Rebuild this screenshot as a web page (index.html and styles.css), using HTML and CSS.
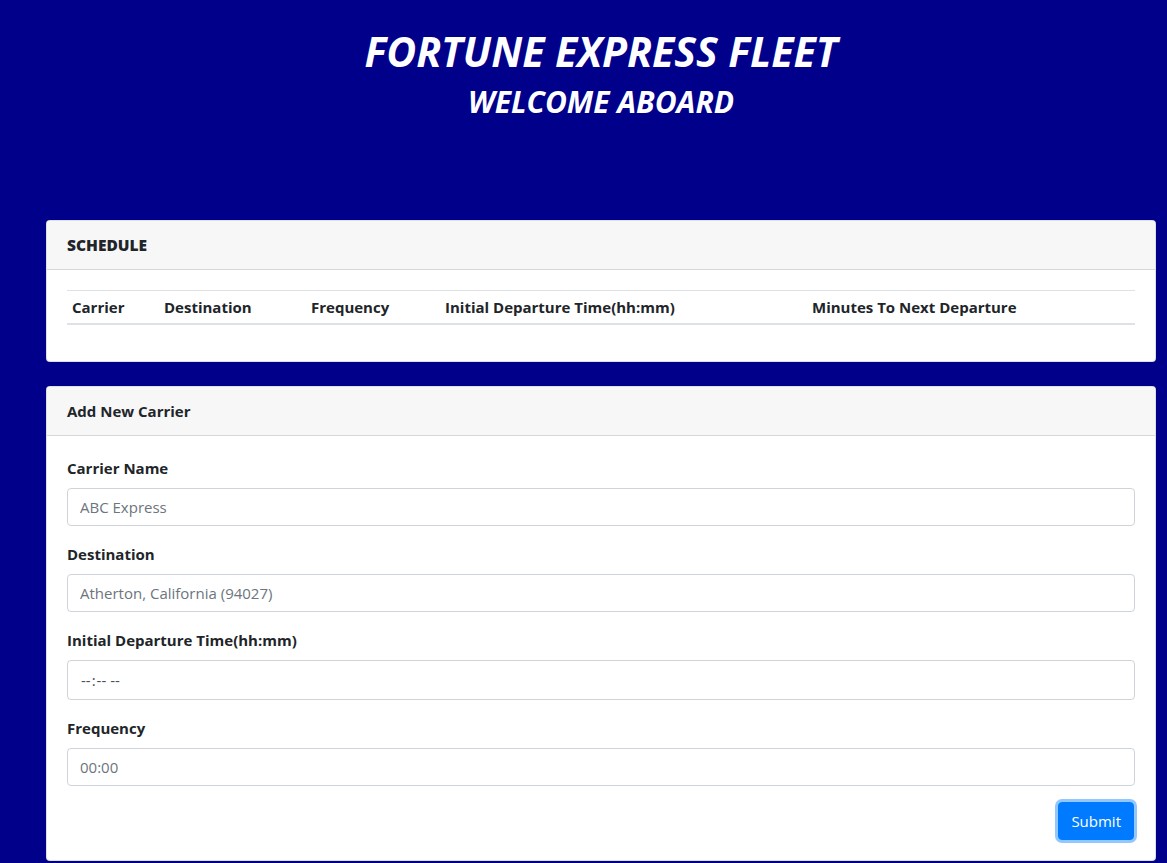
FILE: index.html
```html
<!DOCTYPE html>
<html lang="en">
<head>
<meta charset="utf-8">
<title>Fortune Express Fleet</title>
<link rel="stylesheet" href="styles.css">
</head>
<body>
<div class="page">
  <header class="hero">
    <h1 class="hero-title">FORTUNE EXPRESS FLEET</h1>
    <h2 class="hero-sub">WELCOME ABOARD</h2>
  </header>

  <section class="card">
    <div class="card-header heavy">SCHEDULE</div>
    <div class="card-body">
      <table class="table">
        <thead>
          <tr>
            <th class="c1">Carrier</th>
            <th class="c2">Destination</th>
            <th class="c3">Frequency</th>
            <th class="c4">Initial Departure Time(hh:mm)</th>
            <th class="c5">Minutes To Next Departure</th>
          </tr>
        </thead>
        <tbody></tbody>
      </table>
    </div>
  </section>

  <section class="card">
    <div class="card-header">Add New Carrier</div>
    <div class="card-body">
      <form class="form">
        <div class="form-group">
          <label for="name">Carrier Name</label>
          <input id="name" class="form-control" type="text" placeholder="ABC Express">
        </div>
        <div class="form-group">
          <label for="dest">Destination</label>
          <input id="dest" class="form-control" type="text" placeholder="Atherton, California (94027)">
        </div>
        <div class="form-group">
          <label for="time">Initial Departure Time(hh:mm)</label>
          <input id="time" class="form-control time" type="time">
        </div>
        <div class="form-group">
          <label for="freq">Frequency</label>
          <input id="freq" class="form-control" type="text" placeholder="00:00">
        </div>
        <div class="actions">
          <button type="button" class="btn">Submit</button>
        </div>
      </form>
    </div>
  </section>
</div>
</body>
</html>
```
FILE: styles.css
```css
html, body {
  margin: 0;
  padding: 0;
}
body {
  background: #00008b;
  font-family: "Segoe UI", "Open Sans", "Noto Sans", sans-serif;
  font-size: 16px;
  line-height: 1.5;
  color: #212529;
}
.page {
  width: 1110px;
  margin-left: 46px;
  padding-bottom: 40px;
}
.hero {
  height: 220px;
  padding-top: 27px;
  box-sizing: border-box;
  text-align: center;
  color: #fff;
}
.hero-title {
  margin: 0;
  font-size: 41px;
  font-style: italic;
  font-weight: 700;
  line-height: 1.2;
}
.hero-sub {
  margin: 8px 0 0;
  font-size: 30px;
  font-style: italic;
  font-weight: 700;
  line-height: 1.2;
}
.card {
  background: #fff;
  border: 1px solid rgba(0,0,0,.125);
  border-radius: 4px;
  margin-bottom: 24px;
  overflow: hidden;
}
.card-header {
  background: #f7f7f7;
  border-bottom: 1px solid rgba(0,0,0,.125);
  padding: 12px 20px;
  font-weight: 700;
  font-size: 15px;
  line-height: 24px;
}
.card-header.heavy {
  font-weight: 800;
  font-size: 15.5px;
}
.card-body {
  padding: 20px;
}
.table {
  width: 100%;
  border-collapse: collapse;
  margin-bottom: 16px;
}
.table th {
  text-align: left;
  font-size: 15px;
  font-weight: 700;
  padding: 4px 5px;
  border-top: 1px solid #dee2e6;
  border-bottom: 2px solid #dee2e6;
  line-height: 24px;
  white-space: nowrap;
}
.c1 { width: 82px; }
.c2 { width: 137px; }
.c3 { width: 124px; }
.c4 { width: 357px; }
.form-group {
  margin-bottom: 16px;
}
.form-group label {
  display: block;
  font-weight: 700;
  font-size: 15px;
  margin-bottom: 8px;
  line-height: 24px;
}
.form-control {
  display: block;
  width: 100%;
  box-sizing: border-box;
  height: 38px;
  padding: 6px 12px;
  font-family: inherit;
  font-size: 15px;
  line-height: 24px;
  color: #495057;
  background: #fff;
  border: 1px solid #ced4da;
  border-radius: 4px;
  margin: 0;
}
.form-control::placeholder {
  color: #6c757d;
  opacity: 1;
}
.form-control.time {
  height: 40px;
}
.form-control.time::-webkit-calendar-picker-indicator {
  display: none;
}
.actions {
  display: flex;
  justify-content: flex-end;
}
.btn {
  font-family: inherit;
  font-size: 15px;
  line-height: 24px;
  padding: 6px 12px;
  color: #fff;
  background: #007bff;
  border: 1px solid #007bff;
  border-radius: 4px;
  box-shadow: 0 0 0 3px rgba(38,143,255,.5);
  margin-right: 1px;
}
```
